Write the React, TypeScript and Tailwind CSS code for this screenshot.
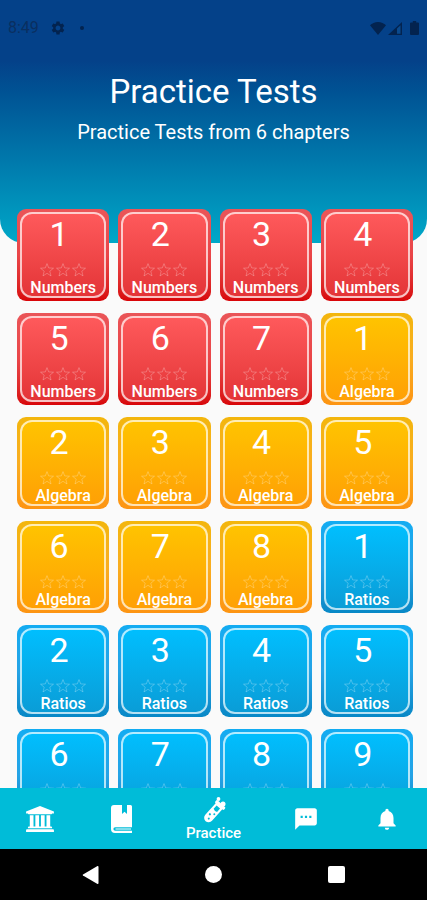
import clsx from 'clsx'
import type { ReactNode } from 'react'
import { MdNotifications, MdSettings, MdTextsms } from 'react-icons/md'

type Chapter = 'Numbers' | 'Algebra' | 'Ratios'

const chapters: { name: Chapter; tests: number }[] = [
  { name: 'Numbers', tests: 7 },
  { name: 'Algebra', tests: 8 },
  { name: 'Ratios', tests: 9 },
]

const tests = chapters.flatMap(({ name, tests: count }) =>
  Array.from({ length: count }, (_, index) => ({ chapter: name, number: index + 1 })),
)

const frameStyles: Record<Chapter, string> = {
  Numbers: 'from-[#ea5558] via-[#ea4548] to-[#d80408]',
  Algebra: 'from-[#f3b60c] via-[#f9ad20] to-[#fd9412]',
  Ratios: 'from-[#12acf2] via-[#25a3e6] to-[#0788c6]',
}

const faceStyles: Record<Chapter, string> = {
  Numbers: 'from-[#ff5a5c] to-[#e33336]',
  Algebra: 'from-[#ffc400] to-[#ff9f05]',
  Ratios: 'from-[#00bfff] to-[#0a9cd6]',
}

function Star() {
  return (
    <svg viewBox="0 0 16 16" className="size-4 fill-none stroke-white/25" aria-hidden="true">
      <path d="M8 1.600l1.700 4.300 4.800.3-3.700 3 1.200 4.700L8 11.300l-4 2.600 1.200-4.700-3.700-3 4.800-.3z" />
    </svg>
  )
}

function TestTile({ chapter, number }: { chapter: Chapter; number: number }) {
  return (
    <button
      type="button"
      className={clsx('h-[92px] rounded-[9px] bg-linear-to-b p-[3px]', frameStyles[chapter])}
    >
      <span
        className={clsx(
          'flex h-full flex-col items-center rounded-xl border-2 border-white/70 bg-linear-to-b bg-origin-border text-white',
          faceStyles[chapter],
        )}
      >
        <span className="pr-2 text-[34px] leading-10">{number}</span>
        <span className="mt-2 flex">
          <Star />
          <Star />
          <Star />
        </span>
        <span className="text-base leading-5 font-medium">{chapter}</span>
      </span>
    </button>
  )
}

function StatusBar() {
  return (
    <div className="flex h-14 items-center justify-between px-2 text-[#03234f]">
      <div className="flex items-center">
        <span className="w-[42px] text-base text-[#0a2f60]">8:49</span>
        <MdSettings className="size-4" />
        <span className="ml-3.5 size-1 rounded-full bg-current" />
      </div>
      <div className="flex items-center">
        <svg viewBox="0 0 16 13" className="h-[13px] w-4 fill-current" aria-hidden="true">
          <path d="M8 13L0 3.200C2 1.300 4.800 0 8 0s6 1.300 8 3.200z" />
        </svg>
        <svg viewBox="0 0 14 13" className="ml-0.5 h-[13px] w-3.5" aria-hidden="true">
          <path d="M0 13L14 0v13z" fill="currentColor" />
          <path d="M9 6.500l3.500-3.200v8.400H9z" fill="#0a4a8e" />
        </svg>
        <svg viewBox="0 0 9 14" className="ml-2 h-3.5 w-[9px] fill-current" aria-hidden="true">
          <path d="M2.800 0h3.400v1.500H8q1 0 1 1V13q0 1-1 1H1q-1 0-1-1V2.500q0-1 1-1h1.800z" />
        </svg>
      </div>
    </div>
  )
}

function BankIcon() {
  return (
    <svg viewBox="0 0 1920 1792" className="h-[26px] w-7 fill-current" aria-hidden="true">
      <path d="M960 0l960 384v128h-128q0 26-20.500 45t-48.500 19H197q-28 0-48.500-19T128 512H0V384zM256 640h256v768h128V640h256v768h128V640h256v768h128V640h256v768h59q28 0 48.500 19t20.500 45v64H128v-64q0-26 20.500-45t48.500-19h59zm1595 960q28 0 48.500 19t20.500 45v128H0v-128q0-26 20.500-45t48.500-19z" />
    </svg>
  )
}

function BookIcon() {
  return (
    <svg viewBox="0 0 21 28" className="h-7 w-[21px]" aria-hidden="true">
      <path
        d="M3 0h8v9l2.500-2.300L16 9V0h3.500Q21 0 21 1.500v20.700H4.200a1.800 1.800 0 000 3.600H21V28H4q-4 0-4-4V3q0-3 3-3z"
        fill="currentColor"
      />
      <path d="M4.500 24H20" stroke="currentColor" strokeWidth="1" />
    </svg>
  )
}

function TestTubeIcon() {
  return (
    <svg viewBox="0 0 24 28" className="h-7 w-6" aria-hidden="true">
      <g transform="rotate(42 11 16)">
        <rect x="5" y="3.500" width="12" height="3.500" rx="1.200" fill="currentColor" />
        <path d="M6.500 6h9v16.500a4.500 4.500 0 01-9 0z" fill="currentColor" />
        <path d="M8.700 8h4.600v4.500q-2.300 1.500-4.600 0z" fill="#00bcd8" />
        <circle cx="12.800" cy="16" r="1" fill="#00bcd8" />
        <circle cx="9.500" cy="19" r="1.100" fill="#00bcd8" />
        <circle cx="11.600" cy="23" r="1" fill="#00bcd8" />
      </g>
      <circle cx="21" cy="7" r="2.500" fill="currentColor" />
      <circle cx="16.500" cy="2" r="1.900" fill="currentColor" />
    </svg>
  )
}

function NavItem({ label, active, children }: { label: string; active?: boolean; children: ReactNode }) {
  return (
    <a
      href={`#${label.toLowerCase()}`}
      aria-label={label}
      aria-current={active ? 'page' : undefined}
      className={clsx('flex flex-col items-center justify-center', active ? 'w-[104px]' : 'flex-1')}
    >
      {children}
      {active ? <span className="text-[15px] leading-4 font-medium">{label}</span> : null}
    </a>
  )
}

export default function App() {
  return (
    <div className="flex h-screen flex-col bg-[#fafafa] font-[Roboto,sans-serif]">
      <main className="min-h-0 flex-1 overflow-y-auto [scrollbar-width:none]">
        <header className="h-[243px] rounded-b-3xl bg-linear-to-b from-[#044189] from-25% to-[#00a8c8] text-white">
          <StatusBar />
          <div className="pt-4 text-center">
            <h1 className="text-[33px] leading-10">Practice Tests</h1>
            <p className="mt-2 text-xl leading-6">Practice Tests from 6 chapters</p>
          </div>
        </header>

        <div className="-mt-[34px] grid grid-cols-4 gap-x-[9px] gap-y-3 pr-3.5 pb-4 pl-[17px]">
          {tests.map((test) => (
            <TestTile key={`${test.chapter}-${test.number}`} {...test} />
          ))}
        </div>
      </main>

      <nav className="flex h-[61px] shrink-0 bg-[#00bcd8] text-white">
        <NavItem label="Home">
          <BankIcon />
        </NavItem>
        <NavItem label="Lessons">
          <BookIcon />
        </NavItem>
        <NavItem label="Practice" active>
          <TestTubeIcon />
        </NavItem>
        <NavItem label="Messages">
          <MdTextsms className="size-[26px]" />
        </NavItem>
        <NavItem label="Notifications">
          <MdNotifications className="size-[26px]" />
        </NavItem>
      </nav>

      <div className="flex h-[51px] shrink-0 items-center justify-center gap-[106px] bg-black">
        <button type="button" aria-label="Back">
          <svg viewBox="0 0 17 20" className="h-5 w-[17px] fill-white" aria-hidden="true">
            <path d="M15.500 1L1 9.400q-.8.600 0 1.200L15.500 19q1 .3 1-1V2q0-1.300-1-1z" />
          </svg>
        </button>
        <button type="button" aria-label="Home screen" className="size-[17px] rounded-full bg-white" />
        <button type="button" aria-label="Recent apps" className="size-[17px] rounded-xs bg-white" />
      </div>
    </div>
  )
}
